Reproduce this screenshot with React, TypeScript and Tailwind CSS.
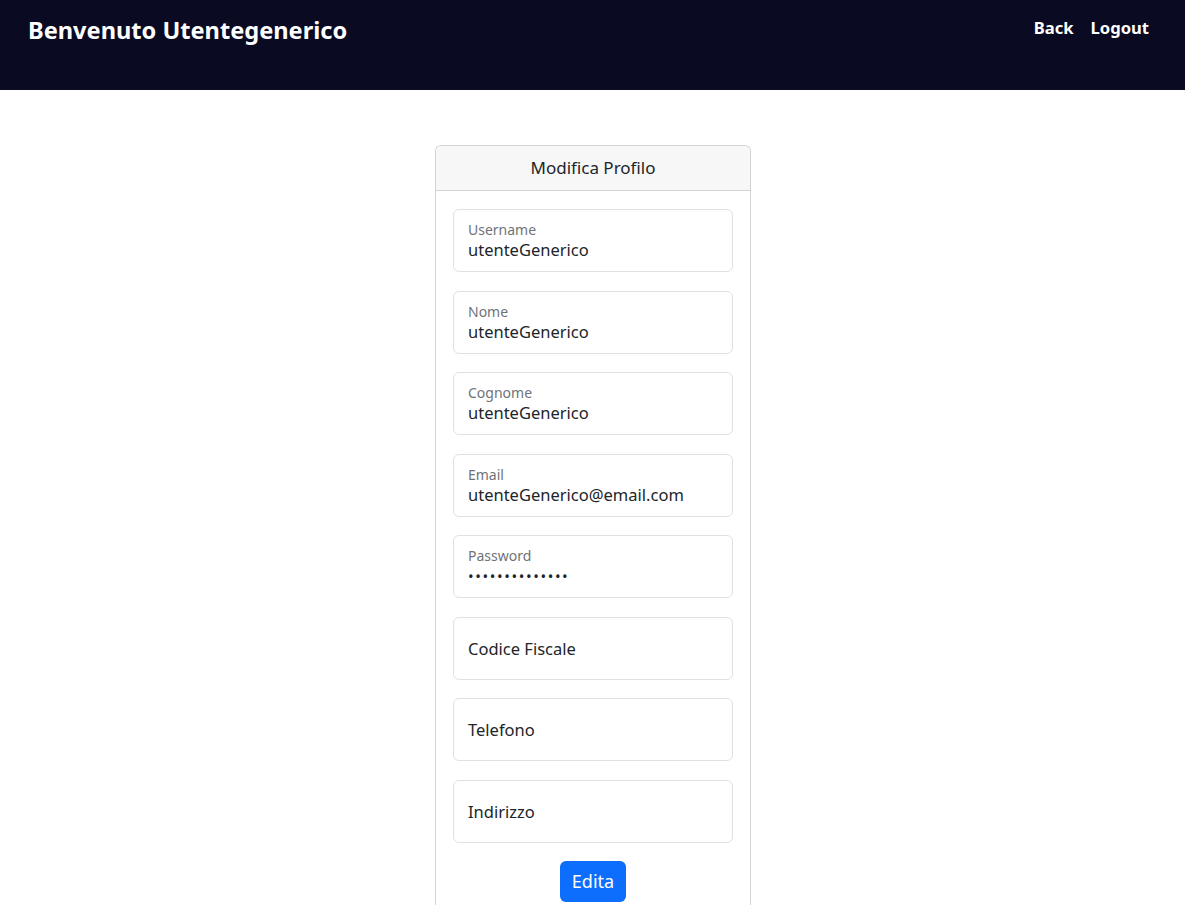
import React from "react"

const fields = [
  { label: "Username", value: "utenteGenerico" },
  { label: "Nome", value: "utenteGenerico" },
  { label: "Cognome", value: "utenteGenerico" },
  { label: "Email", value: "utenteGenerico@email.com" },
  { label: "Password", value: "••••••••••••••", password: true },
  { label: "Codice Fiscale" },
  { label: "Telefono" },
  { label: "Indirizzo" },
]

function FloatingField({ label, value, password }: { label: string; value?: string; password?: boolean }) {
  return (
    <div className="h-[63px] rounded-[6px] border border-[#dee2e6] bg-white px-[14px] pt-[1px] flex flex-col justify-center">
      {value ? (
        <>
          <span className="text-[14px] leading-[18px] text-[#6f7378]">{label}</span>
          <span
            className={
              password
                ? "text-[15px] leading-[22px] tracking-[1.6px] text-[#212529]"
                : "text-[16.5px] leading-[22px] text-[#212529]"
            }
          >
            {value}
          </span>
        </>
      ) : (
        <span className="text-[16.5px] leading-[22px] text-[#212529]">{label}</span>
      )}
    </div>
  )
}

export default function App() {
  return (
    <div className="min-h-[905px] bg-white font-['Noto_Sans',sans-serif]">
      {/* Header */}
      <header className="h-[90px] bg-[#0a0b23] flex items-start justify-between pl-[28px] pr-[36px]">
        <h1 className="mt-[13px] text-[23.6px] font-bold text-white leading-[34px]">Benvenuto Utentegenerico</h1>
        <nav className="mt-[15px] flex gap-[17px] text-[16.6px] font-bold text-white leading-[26px]">
          <a href="#">Back</a>
          <a href="#">Logout</a>
        </nav>
      </header>

      {/* Card */}
      <div className="flex justify-center pt-[55px]">
        <div className="w-[316px] ml-[1px] rounded-t-[6px] border border-[#d4d4d4] border-b-0 bg-white">
          <div className="h-[45px] rounded-t-[6px] border-b border-[#d4d4d4] bg-[#f7f7f7] flex items-center justify-center text-[17px] text-[#212529]">
            Modifica Profilo
          </div>
          <div className="px-[17px] pt-[18px] pb-[20px] flex flex-col gap-[18.5px]">
            {fields.map((f) => (
              <FloatingField key={f.label} {...f} />
            ))}
            <div className="flex justify-center">
              <button className="h-[41px] w-[66px] rounded-[6px] bg-[#0d6efd] text-white text-[18px]">Edita</button>
            </div>
          </div>
        </div>
      </div>
    </div>
  )
}
